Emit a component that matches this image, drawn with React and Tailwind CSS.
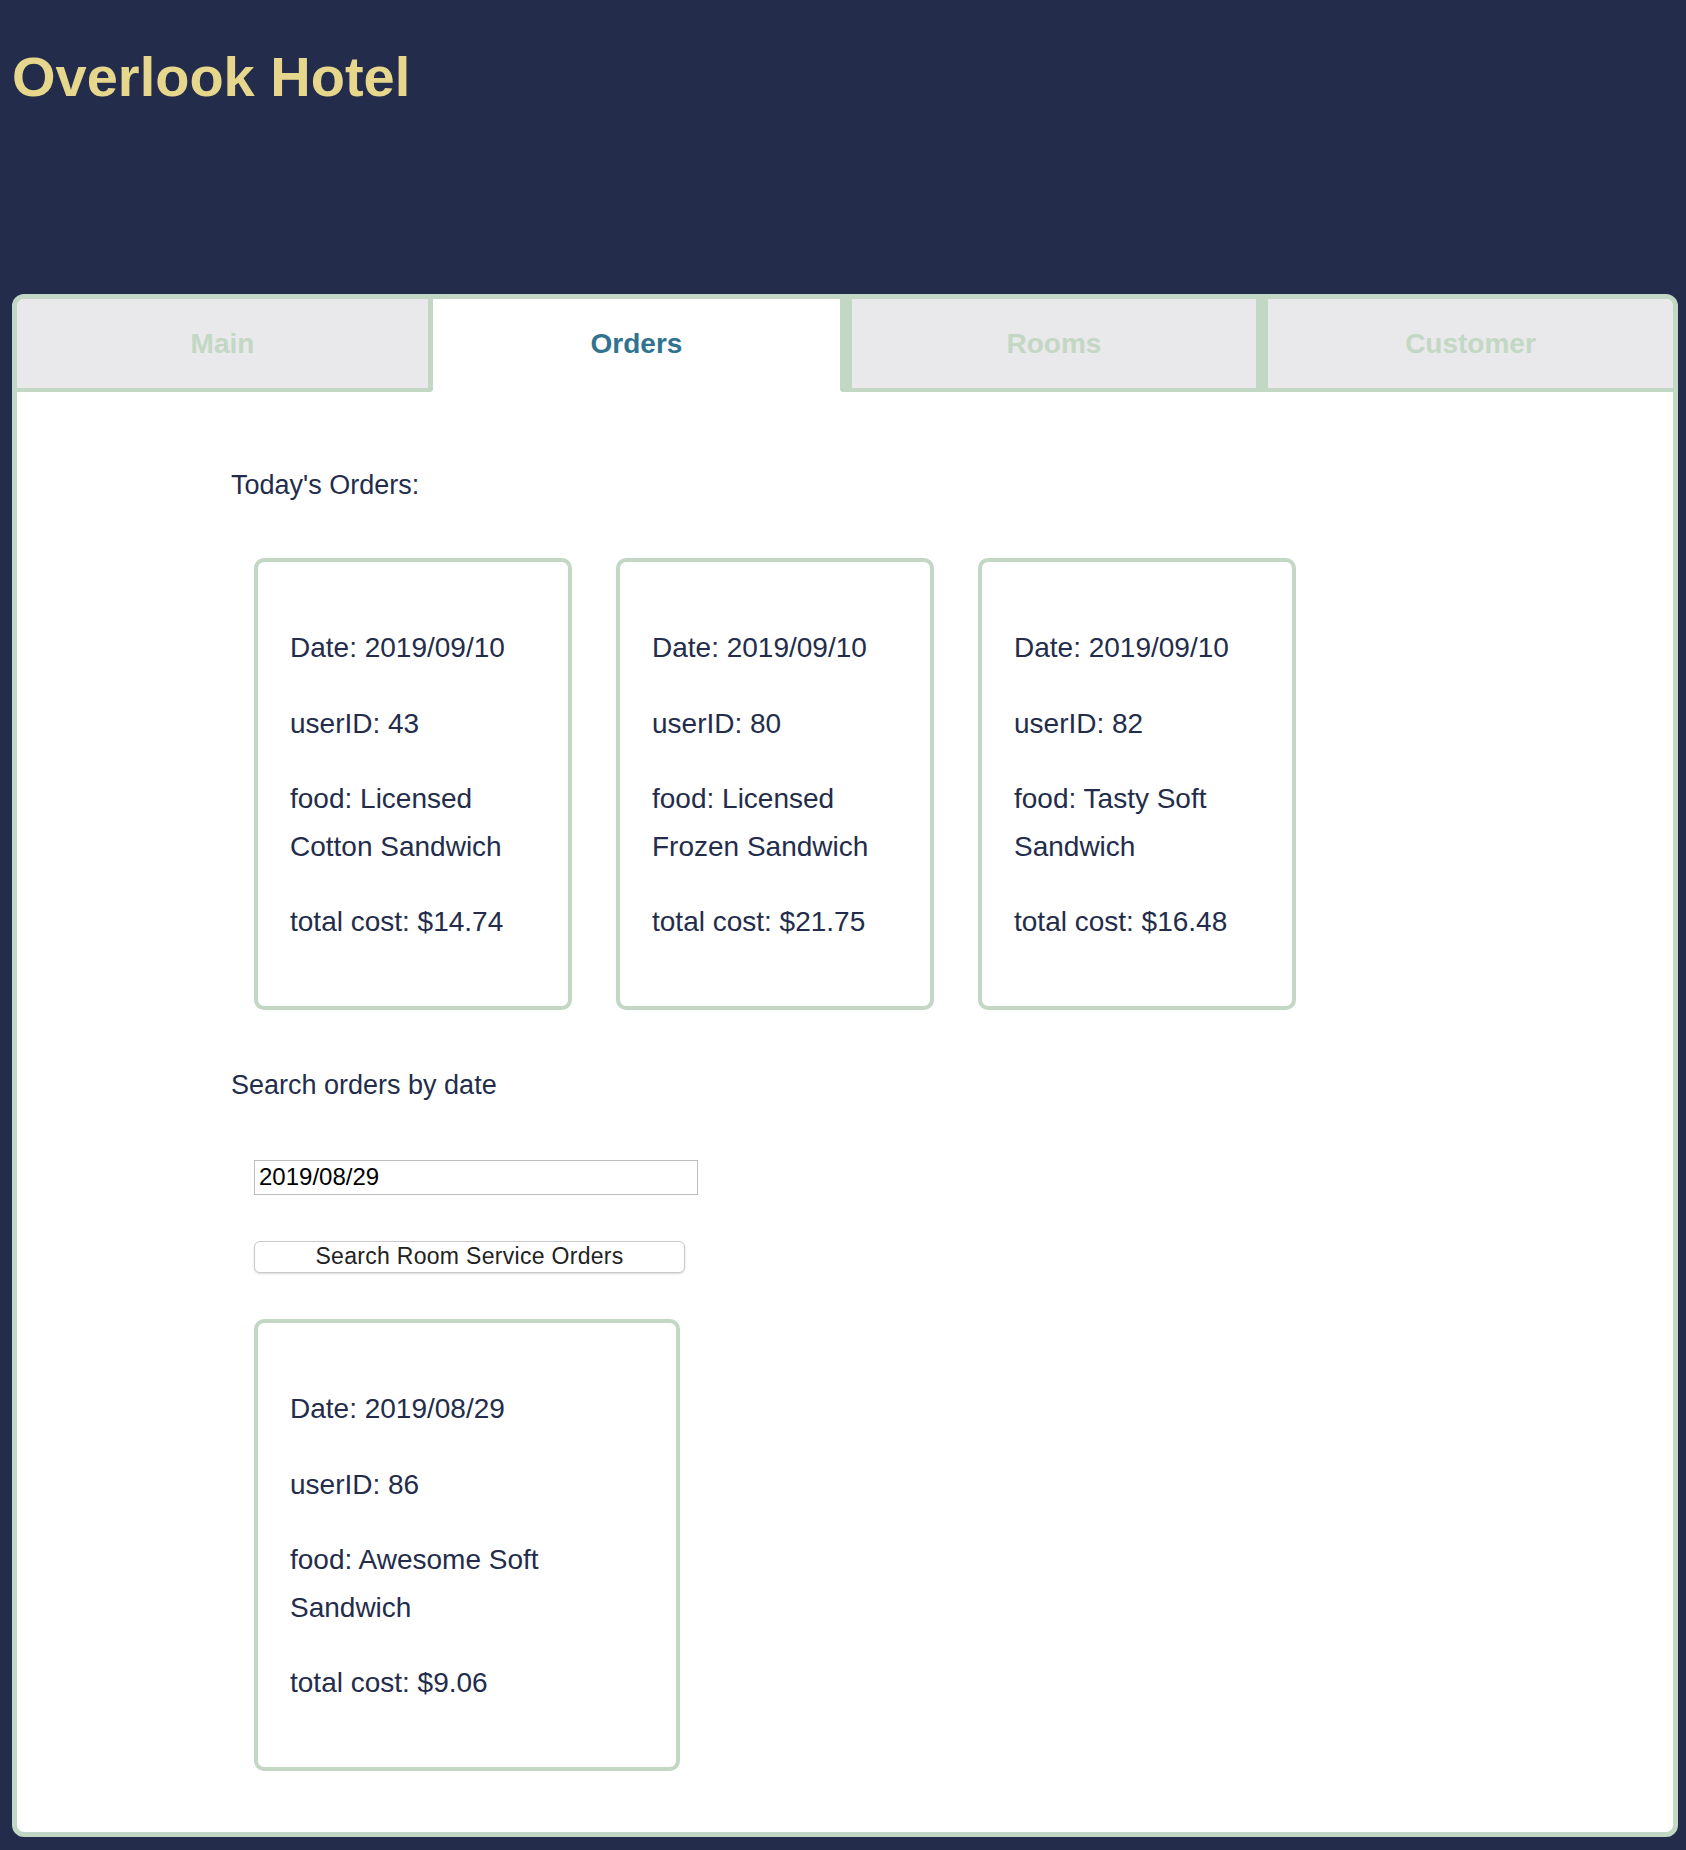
const todaysOrders = [
  { date: '2019/09/10', userID: 43, food: 'Licensed Cotton Sandwich', total: '14.74' },
  { date: '2019/09/10', userID: 80, food: 'Licensed Frozen Sandwich', total: '21.75' },
  { date: '2019/09/10', userID: 82, food: 'Tasty Soft Sandwich', total: '16.48' },
]

const searchResults = [
  { date: '2019/08/29', userID: 86, food: 'Awesome Soft Sandwich', total: '9.06' },
]

const OrderCard = ({ order, wide }) => {
  return (
    <div
      className={`${wide ? 'w-[426px]' : 'w-[318px]'} shrink-0 rounded-[10px] border-4 border-[#c2d8c4] bg-white px-[32px] pt-[62px] pb-[60px] text-[28px] leading-[47.6px] text-[#232d4b]`}
    >
      <div className="flex flex-col gap-[28px]">
        <p>Date: {order.date}</p>
        <p>userID: {order.userID}</p>
        <p>food: {order.food}</p>
        <p>total cost: ${order.total}</p>
      </div>
    </div>
  )
}

const tabs = [
  { name: 'Main', cls: 'border-r-[5px] border-b-4 rounded-br-[4px] bg-[#e9e9eb] text-[#c2d8c4]' },
  { name: 'Orders', cls: 'bg-white pb-[3px] text-[#30738f]' },
  { name: 'Rooms', cls: 'border-l-[12px] border-b-4 rounded-bl-[4px] bg-[#e9e9eb] text-[#c2d8c4]' },
  { name: 'Customer', cls: 'border-l-[12px] border-b-4 bg-[#e9e9eb] text-[#c2d8c4]' },
]

const App = () => {
  return (
    <div className="min-h-screen bg-[#232d4b] pt-[45px] pb-[11px] font-['Liberation_Sans',Arial,sans-serif]">
      {/* Header */}
      <h1 className="px-[12px] text-[56px] leading-[64px] font-bold text-[#e6d78d]">Overlook Hotel</h1>

      {/* Panel */}
      <div className="mt-[185px] ml-[12px] mr-[8px] overflow-hidden rounded-[12px] border-[5px] border-[#c2d8c4] bg-white">
        <nav className="grid h-[93px] grid-cols-[416px_407px_416px_1fr]">
          {tabs.map(tab => (
            <button
              key={tab.name}
              className={`flex items-center justify-center border-[#c2d8c4] text-[28px] font-bold ${tab.cls}`}
            >
              {tab.name}
            </button>
          ))}
        </nav>

        <section className="pl-[214px] pt-[77px] pb-[61px]">
          <h2 className="text-[27px] leading-[32px] text-[#232d4b]">Today's Orders:</h2>
          <div className="mt-[57px] ml-[23px] flex gap-[44px]">
            {todaysOrders.map((order, i) => (
              <OrderCard key={i} order={order} />
            ))}
          </div>

          <h2 className="mt-[59px] text-[27px] leading-[32px] text-[#232d4b]">Search orders by date</h2>
          <div className="ml-[23px] flex flex-col items-start">
            <input
              type="text"
              defaultValue="2019/08/29"
              className="mt-[59px] h-[35px] w-[444px] border border-[#bdbdbd] px-[4px] text-[24px] text-black outline-none"
            />
            <button className="mt-[46px] h-[32px] w-[431px] rounded-[6px] border border-[#c9c9c9] bg-white text-[23px] leading-none tracking-[0.3px] text-[#222] shadow-[0_1px_2px_rgba(0,0,0,0.15)]">
              Search Room Service Orders
            </button>
            <div className="mt-[46px] flex gap-[44px]">
              {searchResults.map((order, i) => (
                <OrderCard key={i} order={order} wide />
              ))}
            </div>
          </div>
        </section>
      </div>
    </div>
  )
}

export default App
